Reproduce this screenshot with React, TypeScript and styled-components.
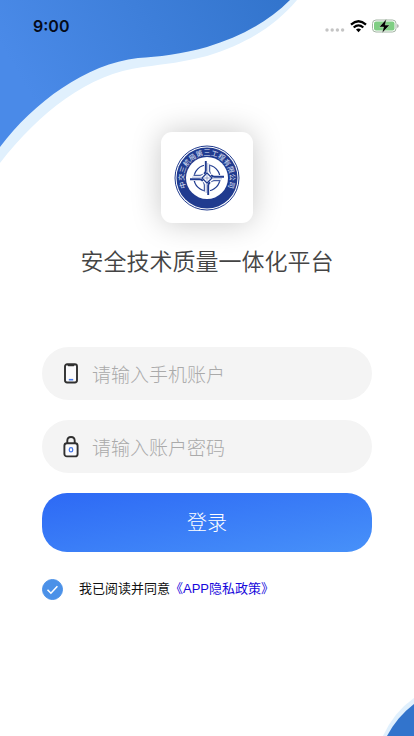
import React from "react";
import styled, { createGlobalStyle } from "styled-components";

const GlobalStyle = createGlobalStyle`
  * { box-sizing: border-box; }
  body {
    margin: 0;
    background: #fff;
    font-family: "Liberation Sans", "Noto Sans CJK SC", sans-serif;
  }
`;

const Page = styled.main`
  position: relative;
  display: flex;
  flex-direction: column;
  min-height: 100vh;
  overflow: hidden;
`;

const TopWave = styled.svg`
  position: absolute;
  top: 0;
  left: 0;
`;

const BottomWave = styled.svg`
  position: absolute;
  right: 0;
  bottom: 0;
`;

const StatusBar = styled.header`
  position: relative;
  display: flex;
  align-items: center;
  justify-content: space-between;
  height: 52px;
  padding: 0 15px 0 33px;
`;

const Clock = styled.time`
  color: #050b18;
  font: 600 16px/20px Inter, sans-serif;
`;

const StatusIcons = styled.div`
  display: flex;
  align-items: center;
  gap: 5px;
`;

const Brand = styled.section`
  position: relative;
  display: flex;
  flex-direction: column;
  align-items: center;
  gap: 21px;
  padding-top: 80px;
`;

const LogoCard = styled.div`
  display: flex;
  align-items: center;
  justify-content: center;
  width: 92px;
  height: 91px;
  border-radius: 11px;
  background: #fff;
  box-shadow: 0 0 30px rgba(0, 0, 0, 0.22);
`;

const Title = styled.h1`
  margin: 0;
  color: #444;
  font: 350 23px/32px "Noto Sans CJK SC", sans-serif;
  white-space: nowrap;
`;

const Form = styled.form`
  position: relative;
  display: flex;
  flex-direction: column;
  gap: 20px;
  padding: 71px 42px 0;
`;

const Field = styled.label`
  display: flex;
  align-items: center;
  gap: 13px;
  height: 53px;
  padding: 0 21px;
  border-radius: 27px;
  background: #f4f4f4;
`;

const Input = styled.input`
  flex: 1;
  min-width: 0;
  height: 30px;
  padding: 0;
  border: 0;
  outline: 0;
  background: transparent;
  color: #333;
  font: 300 19px/30px "Noto Sans CJK SC", sans-serif;

  &::placeholder {
    color: #aaa;
    opacity: 1;
  }
`;

const LoginButton = styled.button`
  height: 59px;
  padding: 0 0 2px;
  border: 0;
  border-radius: 25px;
  background: linear-gradient(to bottom right, #2d69f5, #4791f9);
  color: #fff;
  font: 300 20px/28px "Noto Sans CJK SC", sans-serif;
`;

const Agreement = styled.div`
  display: flex;
  align-items: center;
  gap: 16px;
  height: 34px;
  color: #111;
  font-size: 13px;
  line-height: 20px;
`;

const CheckWrap = styled.span`
  display: grid;
  width: 21px;
  height: 21px;

  > * {
    grid-area: 1 / 1;
  }

  svg {
    pointer-events: none;
    visibility: hidden;
  }

  input:checked + svg {
    visibility: visible;
  }
`;

const Checkbox = styled.input`
  width: 21px;
  height: 21px;
  margin: 0;
  appearance: none;
  border: 1px solid #4b91e8;
  border-radius: 50%;

  &:checked {
    background: #4b91e8;
  }
`;

const PolicyLink = styled.a`
  color: #1708dc;
  text-decoration: none;
`;

function SignalIcon() {
  return (
    <svg width="20" height="14" viewBox="0 0 20 14" fill="#c4c4c4" aria-hidden="true">
      <circle cx="2" cy="11" r="1.7" />
      <circle cx="7.2" cy="11" r="1.7" />
      <circle cx="12.4" cy="11" r="1.7" />
      <circle cx="17.6" cy="11" r="1.7" />
    </svg>
  );
}

function WifiIcon() {
  return (
    <svg width="17" height="13" viewBox="0 0 17 13" fill="none" stroke="#000" strokeWidth="2.3" aria-hidden="true">
      <path d="M1 4.6Q8.5-2 16 4.6" />
      <path d="M3.7 7.5Q8.5 3.3 13.3 7.5" />
      <path d="M6 9.5Q8.5 7.5 11 9.5L8.5 12.2Z" fill="#000" stroke="none" />
    </svg>
  );
}

function BatteryIcon() {
  return (
    <svg width="27" height="14" viewBox="0 0 27 14" aria-hidden="true">
      <rect x="0.5" y="1" width="23.5" height="12" rx="3.5" fill="#fff" stroke="#a2b5a3" />
      <rect x="2" y="2.5" width="20.5" height="9" rx="2" fill="#7fce83" />
      <path d="M14.4 0 7.2 8h4.4l-1.4 6L17.6 6.1h-4.4Z" fill="#000" stroke="#dff2df" strokeWidth=".4" />
      <path d="M25.2 5v4q1.5-.6 1.5-2t-1.5-2Z" fill="#a5a5a5" />
    </svg>
  );
}

function Emblem() {
  return (
    <svg width="66" height="66" viewBox="-33 -33 66 66" role="img" aria-label="中交三航局第三工程有限公司">
      <circle r="32" fill="#fff" stroke="#203b8f" strokeWidth="1" />
      <circle r="30.5" fill="#203b8f" />
      <circle r="21" fill="#fff" />
      <path id="emblem-arc" d="M-20.5 10A22.8 22.8 0 1 1 20.5 10" fill="none" />
      <text fill="#e3e9fa" fontFamily="Noto Sans CJK SC, sans-serif" fontSize="7">
        <textPath href="#emblem-arc" startOffset="50%" textAnchor="middle">中交三航局第三工程有限公司</textPath>
      </text>
      <circle r="13" fill="none" stroke="#203b8f" strokeWidth="1.2" />
      {[0, 90, 180, 270].map((angle) => (
        <g key={angle} transform={`rotate(${angle})`}>
          <path d="M-3-14.5-1-17H2.5V-14.5H3.2V-4H-3Z" fill="#fff" />
        </g>
      ))}
      {[0, 90, 180, 270].map((angle) => (
        <g key={angle} transform={`rotate(${angle})`} fill="none" stroke="#203b8f">
          <path d="M-1.2-17V-7.5Q-1.2-5.5-3-4.2" strokeWidth="1.9" />
          <path d="M2.7-13.5V-7Q2.7-5 4.2-4.2" strokeWidth="1" />
          <path d="M0.8-15V-6" stroke="#9aa7cf" strokeWidth=".8" />
        </g>
      ))}
      <path d="M0-5 5 0 0 5-5 0Z" fill="#fff" stroke="#203b8f" strokeWidth="1.3" />
      <path d="M0-2.8V2.8M-2.8 0H2.8" stroke="#8291c1" strokeWidth=".8" />
    </svg>
  );
}

function PhoneIcon() {
  return (
    <svg width="16" height="22" viewBox="0 0 16 22" fill="none" aria-hidden="true">
      <rect x="2" y="1.2" width="12" height="18.3" rx="2.2" fill="#fbfbfd" stroke="#303030" strokeWidth="1.9" />
      <path d="M4.5 1.5h7v.8q0 1-1 1h-5q-1 0-1-1Z" fill="#303030" />
      <path d="M5.8 16.7h4.4" stroke="#4778e6" strokeWidth="1.6" />
    </svg>
  );
}

function LockIcon() {
  return (
    <svg width="16" height="22" viewBox="0 0 16 22" fill="none" aria-hidden="true">
      <path d="M4.3 7V4.8q0-3.8 3.7-3.8t3.7 3.8V7" stroke="#303030" strokeWidth="1.9" />
      <rect x="1.4" y="7.2" width="13.2" height="13.2" rx="2.5" fill="#fbfbfd" stroke="#303030" strokeWidth="1.9" />
      <rect x="6.3" y="11.7" width="3.4" height="4.2" rx="1.7" stroke="#4778e6" strokeWidth="1.3" />
    </svg>
  );
}

export default function App() {
  return (
    <Page>
      <GlobalStyle />
      <TopWave width="300" height="166" viewBox="0 0 300 166" aria-hidden="true">
        <defs>
          <linearGradient id="wave-blue" x1="0" y1="0.3" x2="1" y2="0">
            <stop offset="0" stopColor="#4a8ae8" />
            <stop offset="1" stopColor="#3274cc" />
          </linearGradient>
        </defs>
        <path d="M0 0H297C274 27 246 44 207 56C184 62 166 64 143 67C88 74 40 112 0 163Z" fill="#e0f0fd" />
        <path d="M0 0H290C268 22 240 37 207 47C182 54 158 57 138 58C86 64 34 102 0 147Z" fill="url(#wave-blue)" />
      </TopWave>
      <BottomWave width="34" height="40" viewBox="0 0 34 40" aria-hidden="true">
        <path d="M3 40Q14 16 34 2V40Z" fill="#e0f0fd" />
        <path d="M7 40Q17 21 34 8V40Z" fill="#3274cc" />
      </BottomWave>
      <StatusBar>
        <Clock>9:00</Clock>
        <StatusIcons>
          <SignalIcon />
          <WifiIcon />
          <BatteryIcon />
        </StatusIcons>
      </StatusBar>
      <Brand>
        <LogoCard>
          <Emblem />
        </LogoCard>
        <Title>安全技术质量一体化平台</Title>
      </Brand>
      <Form onSubmit={(event) => event.preventDefault()}>
        <Field>
          <PhoneIcon />
          <Input type="tel" aria-label="手机账户" placeholder="请输入手机账户" />
        </Field>
        <Field>
          <LockIcon />
          <Input type="password" aria-label="账户密码" placeholder="请输入账户密码" />
        </Field>
        <LoginButton type="submit">登录</LoginButton>
        <Agreement>
          <CheckWrap>
            <Checkbox id="agree" type="checkbox" defaultChecked />
            <svg width="21" height="21" viewBox="0 0 21 21" fill="none" aria-hidden="true">
              <path d="m5.5 10.7 3.4 3.5 6.5-7" stroke="#fff" strokeWidth="1.6" />
            </svg>
          </CheckWrap>
          <span>
            <label htmlFor="agree">我已阅读并同意</label>
            <PolicyLink href="#privacy">《APP隐私政策》</PolicyLink>
          </span>
        </Agreement>
      </Form>
    </Page>
  );
}
